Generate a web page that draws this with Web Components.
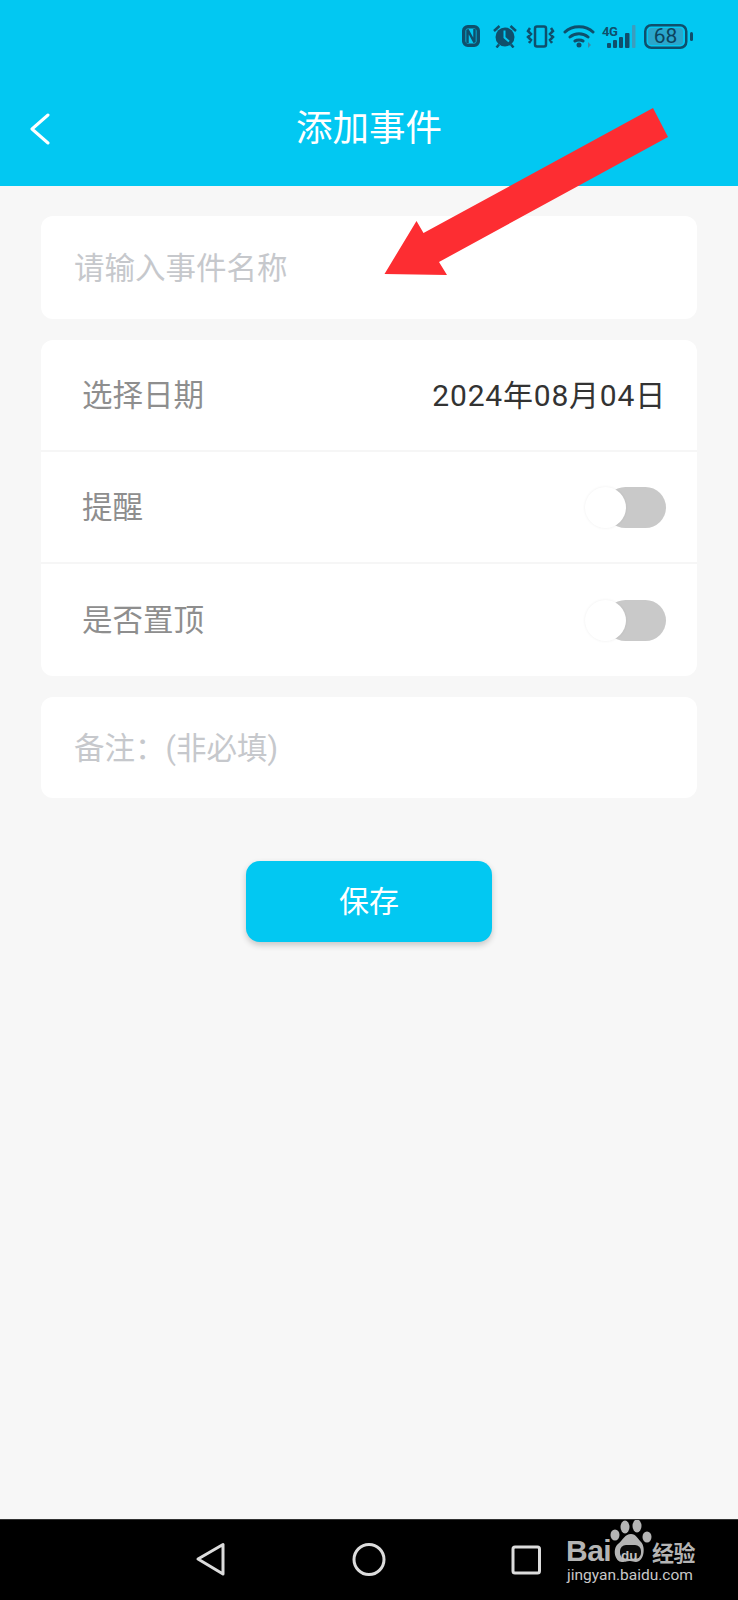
<!DOCTYPE html>
<html lang="zh"><head><meta charset="utf-8"><title>添加事件</title>
<style>html,body{margin:0;padding:0;background:#f7f7f7}</style></head><body>
<event-page></event-page>
<script>
const FONT='Roboto,"Noto Sans CJK SC",sans-serif';
const DK='#0f4f6c';
const def=(name,html)=>customElements.define(name,class extends HTMLElement{constructor(){super();this.attachShadow({mode:'open'}).innerHTML=html;}});

def('status-icons',`<style>:host{display:flex;align-items:center;justify-content:flex-end;height:72px;padding-right:45px;box-sizing:border-box}
svg{display:block}.wrap{display:flex;align-items:center}
.batt{position:relative;width:49px;height:25px;margin-left:8px}
.batt b{position:absolute;left:0;top:0;width:43px;height:25px;display:flex;align-items:center;justify-content:center;font:400 21px/1 Roboto,sans-serif;color:#0d435c}
.g{position:relative;width:34px;height:24px;margin-left:7px}
.g i{position:absolute;left:0;top:1px;font:700 13px/1 Roboto,sans-serif;font-style:normal;letter-spacing:-.5px;color:${DK}}
</style><div class="wrap">
<svg width="18" height="22" viewBox="0 0 18 22" fill="none" stroke="${DK}"><rect x="1.750" y="1.750" width="14.500" height="18.500" rx="4" stroke-width="3.500"/><path d="M5.500 18V4.500l7 13V4" stroke-width="2.500"/></svg>
<svg style="margin-left:13px" width="24" height="24" viewBox="0 0 24 24"><circle cx="12" cy="13" r="9.500" fill="${DK}"/><path d="M11.500 6.500v7l4.500 4" stroke="#02c8f2" stroke-width="2" fill="none"/><path d="M1 7l5.500-5M23 7l-5.500-5M6 20.500l-2.500 3M18 20.500l2.500 3" stroke="${DK}" stroke-width="2.500" fill="none"/></svg>
<svg style="margin-left:9px" width="29" height="23" viewBox="0 0 29 23" fill="none" stroke="${DK}" stroke-width="2.500"><rect x="9" y="1.500" width="11" height="20" rx="2"/><path d="M4 3L2 6l3 3-3 3 3 3-2 3M25 3l2 3-3 3 3 3-3 3 2 3"/></svg>
<svg style="margin-left:8px" width="32" height="24" viewBox="0 0 32 24" fill="none" stroke="${DK}" stroke-width="3" stroke-linecap="round"><path d="M2 8C9 1 23 1 30 8M7 13c5-4.500 13-4.500 18 0M12 17c2-1.500 6-1.500 8 0"/><circle cx="16" cy="21" r="2.500" fill="${DK}" stroke="none"/><path d="M25 18l3 3-3 3z" fill="#3c8aa8" stroke="none"/></svg>
<div class="g"><i>4G</i><svg width="34" height="24" viewBox="0 0 34 24"><rect x="5" y="19" width="4" height="5" rx="1" fill="${DK}"/><rect x="11" y="16" width="4" height="8" rx="1" fill="${DK}"/><rect x="17" y="13" width="4" height="11" rx="1" fill="${DK}"/><rect x="23" y="9" width="4.500" height="15" rx="1" fill="${DK}"/><rect x="30" y="1" width="3.500" height="23" rx="1" fill="#3c9dbe"/></svg></div>
<div class="batt"><svg width="49" height="25" viewBox="0 0 49 25"><rect x="1.250" y="1.250" width="41" height="22.500" rx="6" fill="none" stroke="${DK}" stroke-width="2.500"/><rect x="4" y="4" width="35" height="17" rx="3.500" fill="#2aa6cb"/><rect x="46" y="8" width="3" height="9" rx="1.500" fill="${DK}"/></svg><b>68</b></div>
</div>`);

def('nav-title',`<style>:host{display:flex;align-items:center;justify-content:center;position:relative;height:114px;box-sizing:border-box}
h1{margin:0;font:400 36.500px/1 ${FONT};color:#fff}
button{position:absolute;left:30px;top:41px;width:20px;height:32px;padding:0;border:0;background:none}
svg{display:block}</style>
<button aria-label="返回"><svg width="20" height="32" viewBox="0 0 20 32" fill="none" stroke="#fff" stroke-width="3" stroke-linecap="round" stroke-linejoin="round"><path d="M18 2L2 16l16 14"/></svg></button><h1><slot></slot></h1>`);

def('app-header',`<style>:host{display:block;height:186px;background:#02c8f2}</style><status-icons></status-icons><nav-title>添加事件</nav-title>`);

def('form-card',`<style>:host{display:block;background:#fff;border-radius:12px;overflow:hidden}</style><slot></slot>`);

def('text-field',`<style>:host{display:flex;align-items:center;box-sizing:border-box;padding:3px 33px 0;font:400 30.500px/1 ${FONT};color:#c6c8cc}</style><slot></slot>`);

def('form-row',`<style>:host{display:flex;align-items:center;justify-content:space-between;box-sizing:border-box;height:112px;padding:2px 31px 0 41px;font:400 30.500px/1 ${FONT};color:#8e8e8e;border-bottom:2px solid #f6f6f6}
:host([last]){border-bottom:0;height:112px}
::slotted([slot=value]){color:#333;font:400 30px/1 ${FONT};letter-spacing:.8px}</style><slot></slot><slot name="value"></slot>`);

def('toggle-switch',`<style>:host{display:block;position:relative;width:81px;height:41px;margin-top:-1px}
.t{position:absolute;left:20px;right:0;top:0;bottom:0;background:#c9c9c9;border-radius:21px}
.k{position:absolute;left:0;top:0;width:41px;height:41px;border-radius:50%;background:#fff;box-shadow:0 0 3px rgba(0,0,0,.07)}</style><div class="t"></div><div class="k"></div>`);

def('save-button',`<style>:host{display:flex;align-items:center;justify-content:center;width:246px;height:81px;margin:0 auto;border-radius:14px;background:#02c8f2;color:#fff;font:400 30px/1 ${FONT};box-shadow:0 3px 6px rgba(0,0,0,.2)}</style><slot></slot>`);

def('system-nav',`<style>:host{display:block;position:relative;height:81px;background:#000;border-top:1px solid #333;box-sizing:border-box}
svg{position:absolute;left:0;top:0;display:block}</style>
<svg width="738" height="80" viewBox="0 1520 738 80" fill="none" stroke="#dcdcdc" stroke-width="3" stroke-linejoin="round"><path d="M223 1544.500v29.500l-25-15z"/><circle cx="369" cy="1559.500" r="15"/><rect x="513" y="1547" width="26.500" height="26" rx="2"/></svg><slot></slot>`);

def('baidu-mark',`<style>:host{position:absolute;left:566px;top:1520px;width:136px;height:64px;color:#b4b4b4;display:block}
.bai{position:absolute;left:0;top:18px;font:700 30px/25px "Liberation Sans",sans-serif;letter-spacing:-.5px}
.du{position:absolute;left:55px;top:29px;font:700 13.500px/13px "Liberation Sans",sans-serif;color:#c0c0c0;z-index:1}
.cn{position:absolute;left:86px;top:20px;font:700 22px/1 "Noto Sans CJK SC",sans-serif;letter-spacing:-.5px}
.url{position:absolute;left:1px;top:48px;font:400 15.500px/1 Roboto,sans-serif;color:#c8c8c8;white-space:nowrap}
svg{position:absolute;left:44px;top:0}</style>
<svg width="44" height="44" viewBox="0 0 44 44"><g fill="#b4b4b4"><ellipse cx="15" cy="7" rx="4.500" ry="6.500"/><ellipse cx="27" cy="6" rx="4.500" ry="6.500"/><ellipse cx="5" cy="15" rx="4.500" ry="5.500"/><ellipse cx="37" cy="17" rx="4.500" ry="5.500"/><path d="M21 14c5 0 7 5 10 8 5 5 3 20-5 20-3 0-3-1-6-1s-4 1-8 1C5 42 2 29 8 24c5-4 7-10 13-10z"/></g><rect x="10" y="25" width="21" height="14" rx="6" fill="#0a0a0a"/></svg>
<span class="du">du</span><span class="bai">Bai</span><span class="cn">经验</span><span class="url">jingyan.baidu.com</span>`);

def('event-page',`<style>:host{display:flex;flex-direction:column;position:relative;width:738px;height:1600px;background:#f7f7f7;overflow:hidden}
main{flex:1;display:flex;flex-direction:column;gap:21px;padding:30px 41px 0}
.name{height:103px}.note{height:101px}
save-button{margin-top:42px}
.arrow{position:absolute;left:0;top:0;pointer-events:none}</style>
<app-header></app-header>
<main>
<form-card><text-field class="name">请输入事件名称</text-field></form-card>
<form-card>
<form-row>选择日期<span slot="value">2024年08月04日</span></form-row>
<form-row>提醒<toggle-switch slot="value"></toggle-switch></form-row>
<form-row last>是否置顶<toggle-switch slot="value"></toggle-switch></form-row>
</form-card>
<form-card><text-field class="note">备注：(非必填)</text-field></form-card>
<save-button>保存</save-button>
</main>
<system-nav></system-nav>
<baidu-mark></baidu-mark>
<svg class="arrow" width="738" height="300" viewBox="0 0 738 300"><polygon fill="#fd2d32" points="384.500,274 447,275 439,262 668,137 653,108 423.500,233 416.500,221"/></svg>`);
</script>
</body></html>
